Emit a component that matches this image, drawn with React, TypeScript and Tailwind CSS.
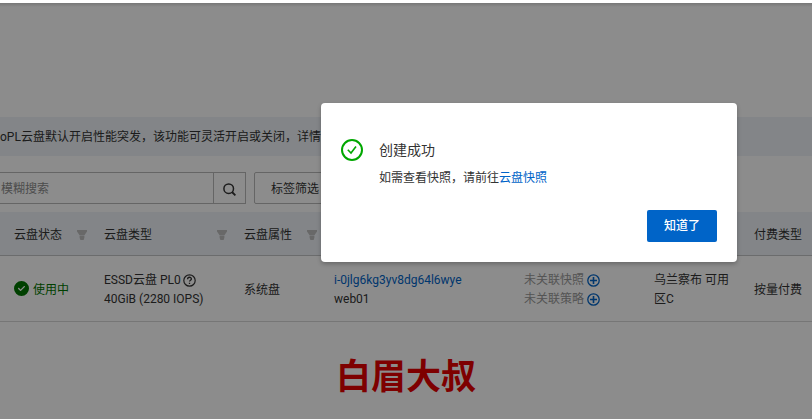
import { FaCircleCheck } from "react-icons/fa6";

const FilterIcon = () => (
  <svg width="10" height="10" viewBox="0 0 10 10" fill="currentColor">
    <path d="M0 0h10v1.4L7.6 5H2.4L0 1.4zM2.6 5.6h4.8v2.2L6.6 10H3.4L2.6 7.8z" />
  </svg>
);

const SearchIcon = () => (
  <svg width="13" height="13" viewBox="0 0 13 13" fill="none" stroke="currentColor" strokeWidth="1.5">
    <circle cx="5.7" cy="5.7" r="4.8" />
    <path d="M9 9l3.4 3.4" strokeWidth="1.8" />
  </svg>
);

const HelpIcon = () => (
  <svg width="13" height="13" viewBox="0 0 13 13" fill="none" stroke="currentColor">
    <circle cx="6.5" cy="6.5" r="5.7" strokeWidth="1.2" />
    <path d="M4.6 5.2c0-2.6 3.8-2.5 3.8-.2 0 1.3-1.9 1.2-1.9 2.6M6.5 8.7v1.3" strokeWidth="1.3" />
  </svg>
);

const AddIcon = () => (
  <svg width="13" height="13" viewBox="0 0 13 13" fill="none" stroke="currentColor" strokeWidth="1.3">
    <circle cx="6.5" cy="6.5" r="5.7" />
    <path d="M6.5 3v7M3 6.5h7" strokeWidth="1.6" />
  </svg>
);

const SuccessIcon = () => (
  <svg width="22" height="22" viewBox="0 0 22 22" fill="none" stroke="currentColor">
    <circle cx="11" cy="11" r="10" strokeWidth="2" />
    <path d="M6.8 10.8 10 14l5-6.6" strokeWidth="1.6" />
  </svg>
);

const columns = [
  { title: "云盘状态", filter: true, width: "w-[90px]" },
  { title: "云盘类型", filter: true, width: "w-[140px]" },
  { title: "云盘属性", filter: true, width: "w-[90px]" },
  { title: "", filter: false, width: "w-[190px]" },
  { title: "", filter: false, width: "w-[130px]" },
  { title: "", filter: false, width: "w-[100px]" },
  { title: "付费类型", filter: false, width: "" },
];

const associations = ["未关联快照", "未关联策略"];

const DiskTable = () => (
  <table className="w-full table-fixed border-collapse text-left">
    <thead>
      <tr className="h-[43px] border-b border-[#c3c5c6] bg-[#eff3f8]">
        {columns.map((column, index) => (
          <th key={index} className={`pt-1 pr-[3px] pl-3.5 font-normal ${column.width}`}>
            <span className="flex items-center justify-between whitespace-nowrap">
              {column.title}
              {column.filter && (
                <button type="button" aria-label="筛选" className="text-[#bdbdbd]">
                  <FilterIcon />
                </button>
              )}
            </span>
          </th>
        ))}
      </tr>
    </thead>
    <tbody>
      <tr className="h-[66px] border-b border-[#d8d8d8] leading-[19px]">
        <td className="pt-1 pl-3.5">
          <span className="flex items-start gap-1 whitespace-nowrap text-[#007500]">
            <FaCircleCheck size={15} />
            使用中
          </span>
        </td>
        <td className="pt-1 pl-3.5 whitespace-nowrap">
          <div className="flex items-center gap-0.5">
            ESSD云盘 PL0 <HelpIcon />
          </div>
          <div>40GiB (2280 IOPS)</div>
        </td>
        <td className="pt-1 pl-3.5">系统盘</td>
        <td className="pt-1 pl-3.5 whitespace-nowrap">
          <a href="#instance" className="block text-[#0064c8]">
            i-0jlg6kg3yv8dg64l6wye
          </a>
          <div>web01</div>
        </td>
        <td className="pt-1 pl-3.5 text-[#999]">
          {associations.map((label) => (
            <div key={label} className="flex items-center gap-[3px] whitespace-nowrap">
              {label}
              <button type="button" aria-label="关联" className="text-[#0064c8]">
                <AddIcon />
              </button>
            </div>
          ))}
        </td>
        <td className="pt-1 pr-2 pl-3.5">乌兰察布 可用区C</td>
        <td className="pt-1 pl-3.5 whitespace-nowrap">按量付费</td>
      </tr>
    </tbody>
  </table>
);

const SuccessDialog = () => (
  <div
    role="dialog"
    aria-modal="true"
    aria-labelledby="dialog-title"
    className="absolute top-[103px] left-[321px] w-[416px] rounded-sm bg-white px-5 pt-9 pb-5 shadow-[0_2px_4px_rgba(0,0,0,0.25)]"
  >
    <div className="flex gap-4">
      <span className="text-[#00a700]">
        <SuccessIcon />
      </span>
      <div>
        <h2 id="dialog-title" className="text-sm leading-[22px]">
          创建成功
        </h2>
        <p className="mt-2 leading-[19px]">
          如需查看快照，请前往
          <a href="#snapshots" className="text-[#0064c8]">
            云盘快照
          </a>
        </p>
      </div>
    </div>
    <div className="mt-[22px] flex justify-end">
      <button type="button" className="h-8 w-[70px] rounded-xs bg-[#0064c8] font-medium text-white">
        知道了
      </button>
    </div>
  </div>
);

export default function App() {
  return (
    <div className="min-h-screen overflow-hidden border-t-[3px] border-white bg-white font-[Roboto,'Noto_Sans_CJK_SC',sans-serif] text-xs leading-[18px] text-[#333]">
      <main className="flex flex-col pt-[114px]">
        <div className="flex h-[39px] items-center overflow-hidden bg-[#eff3f8] whitespace-nowrap">
          oPL云盘默认开启性能突发，该功能可灵活开启或关闭，详情请
        </div>
        <div className="flex gap-2 pt-4 pb-2">
          <form className="flex h-8 w-[246px] border-y border-r border-[#b8b8b8]">
            <input
              type="text"
              aria-label="搜索云盘"
              placeholder="模糊搜索"
              className="min-w-0 flex-1 bg-transparent pt-0.5 pl-px placeholder:text-[#8c8c8c]"
            />
            <button
              type="button"
              aria-label="搜索"
              className="flex w-8 items-center justify-center border-l border-[#b8b8b8] pt-0.5"
            >
              <SearchIcon />
            </button>
          </form>
          <button type="button" className="h-8 rounded-xs border border-[#b8b8b8] px-4 pt-0.5">
            标签筛选
          </button>
        </div>
        <DiskTable />
        <div className="pt-[34px] pl-[336px] text-[35px] leading-[44px] font-bold text-[#e60000]">
          白眉大叔
        </div>
      </main>
      <div className="absolute inset-x-0 top-[3px] bottom-0 bg-black/45">
        <div className="h-1 bg-linear-to-b from-black/15 to-transparent" />
      </div>
      <SuccessDialog />
    </div>
  );
}
